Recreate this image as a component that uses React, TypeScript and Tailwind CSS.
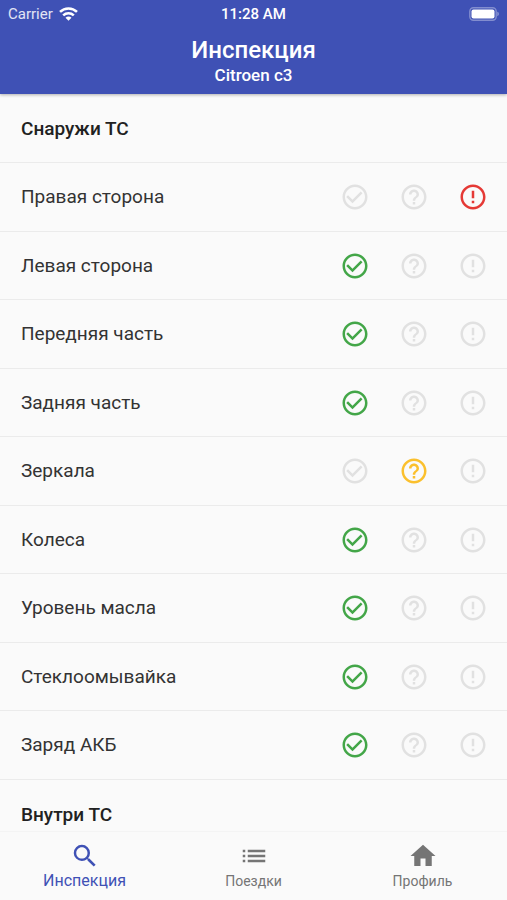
import { useState } from "react";
import { clsx } from "clsx";
import type { IconType } from "react-icons";
import { MdCheckCircleOutline, MdErrorOutline, MdHelpOutline, MdHome, MdList, MdSearch } from "react-icons/md";

type Status = "ok" | "unknown" | "problem";

type Item = {
    id: string;
    label: string;
    status: Status;
};

const outsideItems: Item[] = [
    { id: "right", label: "Правая сторона", status: "problem" },
    { id: "left", label: "Левая сторона", status: "ok" },
    { id: "front", label: "Передняя часть", status: "ok" },
    { id: "back", label: "Задняя часть", status: "ok" },
    { id: "mirrors", label: "Зеркала", status: "unknown" },
    { id: "wheels", label: "Колеса", status: "ok" },
    { id: "oil", label: "Уровень масла", status: "ok" },
    { id: "washer", label: "Стеклоомывайка", status: "ok" },
    { id: "battery", label: "Заряд АКБ", status: "ok" }
];

const options: { value: Status; title: string; icon: IconType; active: string }[] = [
    { value: "ok", title: "Исправно", icon: MdCheckCircleOutline, active: "peer-checked:text-[#43a648]" },
    { value: "unknown", title: "Под вопросом", icon: MdHelpOutline, active: "peer-checked:text-[#fbc02d]" },
    { value: "problem", title: "Неисправно", icon: MdErrorOutline, active: "peer-checked:text-[#e53935]" }
];

const tabs: { id: string; label: string; icon: IconType }[] = [
    { id: "inspection", label: "Инспекция", icon: MdSearch },
    { id: "trips", label: "Поездки", icon: MdList },
    { id: "profile", label: "Профиль", icon: MdHome }
];

const WifiIcon = () => (
    <svg className="h-[14px] w-[19px]" viewBox="0 0 19 14" fill="none" stroke="currentColor" strokeWidth="2.6">
        <path d="M1 4.9C5.8.3 13.2.3 18 4.9" />
        <path d="M4.2 8.4c3-2.8 7.6-2.8 10.6 0" />
        <path d="M9.5 13.8 6.5 10.8c1.7-1.6 4.3-1.6 6 0z" fill="currentColor" stroke="none" />
    </svg>
);

const BatteryIcon = () => (
    <svg className="h-[14px] w-[30px]" viewBox="0 0 30 14">
        <rect x="0.8" y="0.8" width="26.4" height="12.4" rx="3.6" fill="none" stroke="#fff" strokeOpacity="0.35" strokeWidth="1.4" />
        <rect x="2.5" y="2.5" width="23" height="9" rx="2" fill="#fff" />
        <path d="M28.4 4.8c1.8.6 1.8 3.8 0 4.4z" fill="#fff" fillOpacity="0.45" />
    </svg>
);

const StatusBar = () => (
    <div className="grid grid-cols-3 items-center px-2 pt-1 text-[15px] leading-5">
        <div className="flex items-center gap-[6px] text-white/85">
            Carrier
            <span className="text-white">
                <WifiIcon />
            </span>
        </div>
        <div className="text-center font-medium">11:28 AM</div>
        <div className="flex justify-end">
            <BatteryIcon />
        </div>
    </div>
);

const SectionTitle = ({ children }: { children: string }) => (
    <h2 className="flex h-[69px] items-center border-b border-[#ebebeb] px-[21px] pt-0.5 text-[19px] font-medium">{children}</h2>
);

const InspectionRow = ({ item }: { item: Item }) => (
    <li className="h-[69px] border-b border-[#ebebeb] even:h-[68px]">
        <fieldset className="flex h-full items-center pr-[19px] pl-[21px]" aria-label={item.label}>
            <span className="flex-1 pt-px text-[19px] text-[#333]">{item.label}</span>
            <div className="flex gap-[29px]">
                {options.map(({ value, title, icon: Icon, active }) => (
                    <label key={value} className="relative cursor-pointer">
                        <input
                            type="radio"
                            name={item.id}
                            value={value}
                            aria-label={title}
                            defaultChecked={item.status === value}
                            className="peer sr-only"
                        />
                        <Icon className={clsx("size-[30px] text-[#e1e1e1]", active)} />
                    </label>
                ))}
            </div>
        </fieldset>
    </li>
);

const App = () => {
    const [activeTab, setActiveTab] = useState("inspection");

    return (
        <div className="flex h-screen flex-col bg-[#fafafa] font-['Roboto','Liberation_Sans',sans-serif] text-[#212121]">
            <header className="z-10 bg-[#3f51b5] pb-2 text-white shadow-[0_1px_3px_rgba(0,0,0,0.3)]">
                <StatusBar />
                <h1 className="pt-3 text-center text-2xl leading-[29px] font-medium">Инспекция</h1>
                <p className="text-center text-[17px] leading-[21px] font-medium">Citroen c3</p>
            </header>

            <main className="min-h-0 flex-1 overflow-y-auto [scrollbar-width:none]">
                <SectionTitle>Снаружи ТС</SectionTitle>
                <ul>
                    {outsideItems.map((item) => (
                        <InspectionRow key={item.id} item={item} />
                    ))}
                </ul>
                <SectionTitle>Внутри ТС</SectionTitle>
            </main>

            <nav className="grid h-[69px] grid-cols-3 border-t border-[#f4f4f4]">
                {tabs.map(({ id, label, icon: Icon }) => {
                    const selected = id === activeTab;

                    return (
                        <button
                            key={id}
                            type="button"
                            onClick={() => setActiveTab(id)}
                            className={clsx(
                                "flex flex-col items-center pt-[9px]",
                                selected ? "text-[16px] text-[#3f51b5]" : "text-[14px] text-[#757575]"
                            )}
                        >
                            <Icon className="size-[30px]" />
                            <span className="leading-5">{label}</span>
                        </button>
                    );
                })}
            </nav>
        </div>
    );
};

export default App;
